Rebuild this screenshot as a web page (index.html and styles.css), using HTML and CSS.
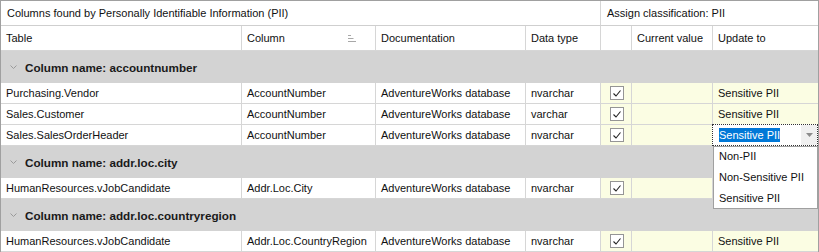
FILE: index.html
```html
<!DOCTYPE html>
<html>
<head>
<meta charset="utf-8">
<title>PII classification</title>
<link rel="stylesheet" href="styles.css">
</head>

<body>
<div class="wrap">
	<div class="grid">
		<div class="band wide">Columns found by Personally Identifiable Information (PII)</div>
		<div class="band assign">Assign classification: PII</div>

		<div class="hd">Table</div>
		<div class="hd sort">Column
			<svg class="sorticon" width="9" height="8" viewBox="0 0 9 8"><path d="M0 1.5h3M0 4.5h5.5M0 7.5h8" stroke="#a8a8a8" stroke-width="1"/></svg>
		</div>
		<div class="hd">Documentation</div>
		<div class="hd">Data type</div>
		<div class="hd"></div>
		<div class="hd">Current value</div>
		<div class="hd last">Update to</div>

		<div class="group"><svg class="chev" width="7" height="4" viewBox="0 0 7 4"><path d="M0.5 0.5L3.5 3.5L6.5 0.5" fill="none" stroke="#9a9a9a" stroke-width="1"/></svg>Column name: accountnumber</div>

		<div class="cell">Purchasing.Vendor</div>
		<div class="cell">AccountNumber</div>
		<div class="cell">AdventureWorks database</div>
		<div class="cell">nvarchar</div>
		<div class="cell yel chk"><span class="box"><svg width="12" height="12" viewBox="0 0 12 12"><path d="M2.5 6.5L5 9L9.5 3.5" fill="none" stroke="#222" stroke-width="1.1"/></svg></span></div>
		<div class="cell yel"></div>
		<div class="cell yel last">Sensitive PII</div>

		<div class="cell">Sales.Customer</div>
		<div class="cell">AccountNumber</div>
		<div class="cell">AdventureWorks database</div>
		<div class="cell">varchar</div>
		<div class="cell yel chk"><span class="box"><svg width="12" height="12" viewBox="0 0 12 12"><path d="M2.5 6.5L5 9L9.5 3.5" fill="none" stroke="#222" stroke-width="1.1"/></svg></span></div>
		<div class="cell yel"></div>
		<div class="cell yel last">Sensitive PII</div>

		<div class="cell">Sales.SalesOrderHeader</div>
		<div class="cell">AccountNumber</div>
		<div class="cell">AdventureWorks database</div>
		<div class="cell">nvarchar</div>
		<div class="cell yel chk"><span class="box"><svg width="12" height="12" viewBox="0 0 12 12"><path d="M2.5 6.5L5 9L9.5 3.5" fill="none" stroke="#222" stroke-width="1.1"/></svg></span></div>
		<div class="cell yel"></div>
		<div class="cell yel last edit">
			<div class="editor">
				<span class="sel">Sensitive PII</span>
				<span class="btn"><svg width="7" height="4" viewBox="0 0 7 4"><path d="M0 0h7L3.5 4z" fill="#8c8c8c"/></svg></span>
			</div>
		</div>

		<div class="group"><svg class="chev" width="7" height="4" viewBox="0 0 7 4"><path d="M0.5 0.5L3.5 3.5L6.5 0.5" fill="none" stroke="#9a9a9a" stroke-width="1"/></svg>Column name: addr.loc.city</div>

		<div class="cell">HumanResources.vJobCandidate</div>
		<div class="cell">Addr.Loc.City</div>
		<div class="cell">AdventureWorks database</div>
		<div class="cell">nvarchar</div>
		<div class="cell yel chk"><span class="box"><svg width="12" height="12" viewBox="0 0 12 12"><path d="M2.5 6.5L5 9L9.5 3.5" fill="none" stroke="#222" stroke-width="1.1"/></svg></span></div>
		<div class="cell yel"></div>
		<div class="cell yel last"></div>

		<div class="group"><svg class="chev" width="7" height="4" viewBox="0 0 7 4"><path d="M0.5 0.5L3.5 3.5L6.5 0.5" fill="none" stroke="#9a9a9a" stroke-width="1"/></svg>Column name: addr.loc.countryregion</div>

		<div class="cell">HumanResources.vJobCandidate</div>
		<div class="cell">Addr.Loc.CountryRegion</div>
		<div class="cell">AdventureWorks database</div>
		<div class="cell">nvarchar</div>
		<div class="cell yel chk"><span class="box"><svg width="12" height="12" viewBox="0 0 12 12"><path d="M2.5 6.5L5 9L9.5 3.5" fill="none" stroke="#222" stroke-width="1.1"/></svg></span></div>
		<div class="cell yel"></div>
		<div class="cell yel last">Sensitive PII</div>
	</div>

	<div class="popup">
		<div>Non-PII</div>
		<div>Non-Sensitive PII</div>
		<div>Sensitive PII</div>
	</div>
</div>
</body>

</html>
```

FILE: styles.css
```css
*
{
	margin:0;
	padding:0;
	box-sizing:border-box;
}
body
{
	font-family:"Liberation Sans", Arial, sans-serif;
	font-size:11px;
	color:#111;
	background:#fff;
	overflow:hidden;
}
div.wrap
{
	position:relative;
	width:819px;
}
div.grid
{
	display:grid;
	grid-template-columns:241px 134px 150px 75px 31px 81px 105px;
	border:1px solid #a0a0a0;
	border-bottom:none;
}
div.band,
div.hd,
div.cell
{
	display:flex;
	align-items:center;
	padding-left:5px;
	white-space:nowrap;
	overflow:hidden;
	border-right:1px solid #d6d6d6;
	border-bottom:1px solid #d6d6d6;
}
div.band
{
	height:25px;
	border-bottom-color:#cfcfcf;
}
div.band.wide
{
	grid-column:span 4;
	padding-left:6px;
}
div.band.assign
{
	grid-column:span 3;
	padding-left:6px;
	border-right:none;
}
div.hd
{
	height:25px;
}
div.hd.sort svg.sorticon
{
	margin-left:auto;
	margin-right:18px;
}
div.cell
{
	height:21px;
}
.last
{
	border-right:none !important;
}
div.cell.yel
{
	background-color:#fbfde3;
}
div.cell.chk
{
	justify-content:center;
	padding-left:0;
}
span.box
{
	display:flex;
	align-items:center;
	justify-content:center;
	width:14px;
	height:14px;
	border:1px solid #959595;
	background:#fff;
	margin-left:1px;
}
div.group
{
	grid-column:1 / -1;
	height:32px;
	display:flex;
	align-items:center;
	padding-left:9px;
	background-color:#d3d3d3;
	font-weight:bold;
	font-size:11.7px;
	color:#1a1a1a;
	white-space:nowrap;
}
svg.chev
{
	margin-right:8px;
}

/* editor over the focused cell */
div.cell.edit
{
	position:relative;
	overflow:visible;
	background:#fff;
}
div.editor
{
	position:absolute;
	left:-1px;
	top:-1px;
	right:0;
	bottom:-1px;
	border:1px dotted #333;
	background:#fff;
	display:flex;
	align-items:center;
	padding-left:6px;
}
span.sel
{
	background-color:#0078d7;
	color:#fff;
	line-height:14px;
}
span.btn
{
	position:absolute;
	right:0;
	top:0;
	bottom:0;
	width:16px;
	background:#f0f0f0;
	display:flex;
	align-items:center;
	justify-content:center;
}
div.popup
{
	position:absolute;
	left:713px;
	top:146px;
	width:105px;
	height:63px;
	background:#fff;
	border:1px solid #a0a0a0;
	z-index:2;
}
div.popup div
{
	height:21px;
	line-height:19px;
	padding-left:5px;
	white-space:nowrap;
}
```
